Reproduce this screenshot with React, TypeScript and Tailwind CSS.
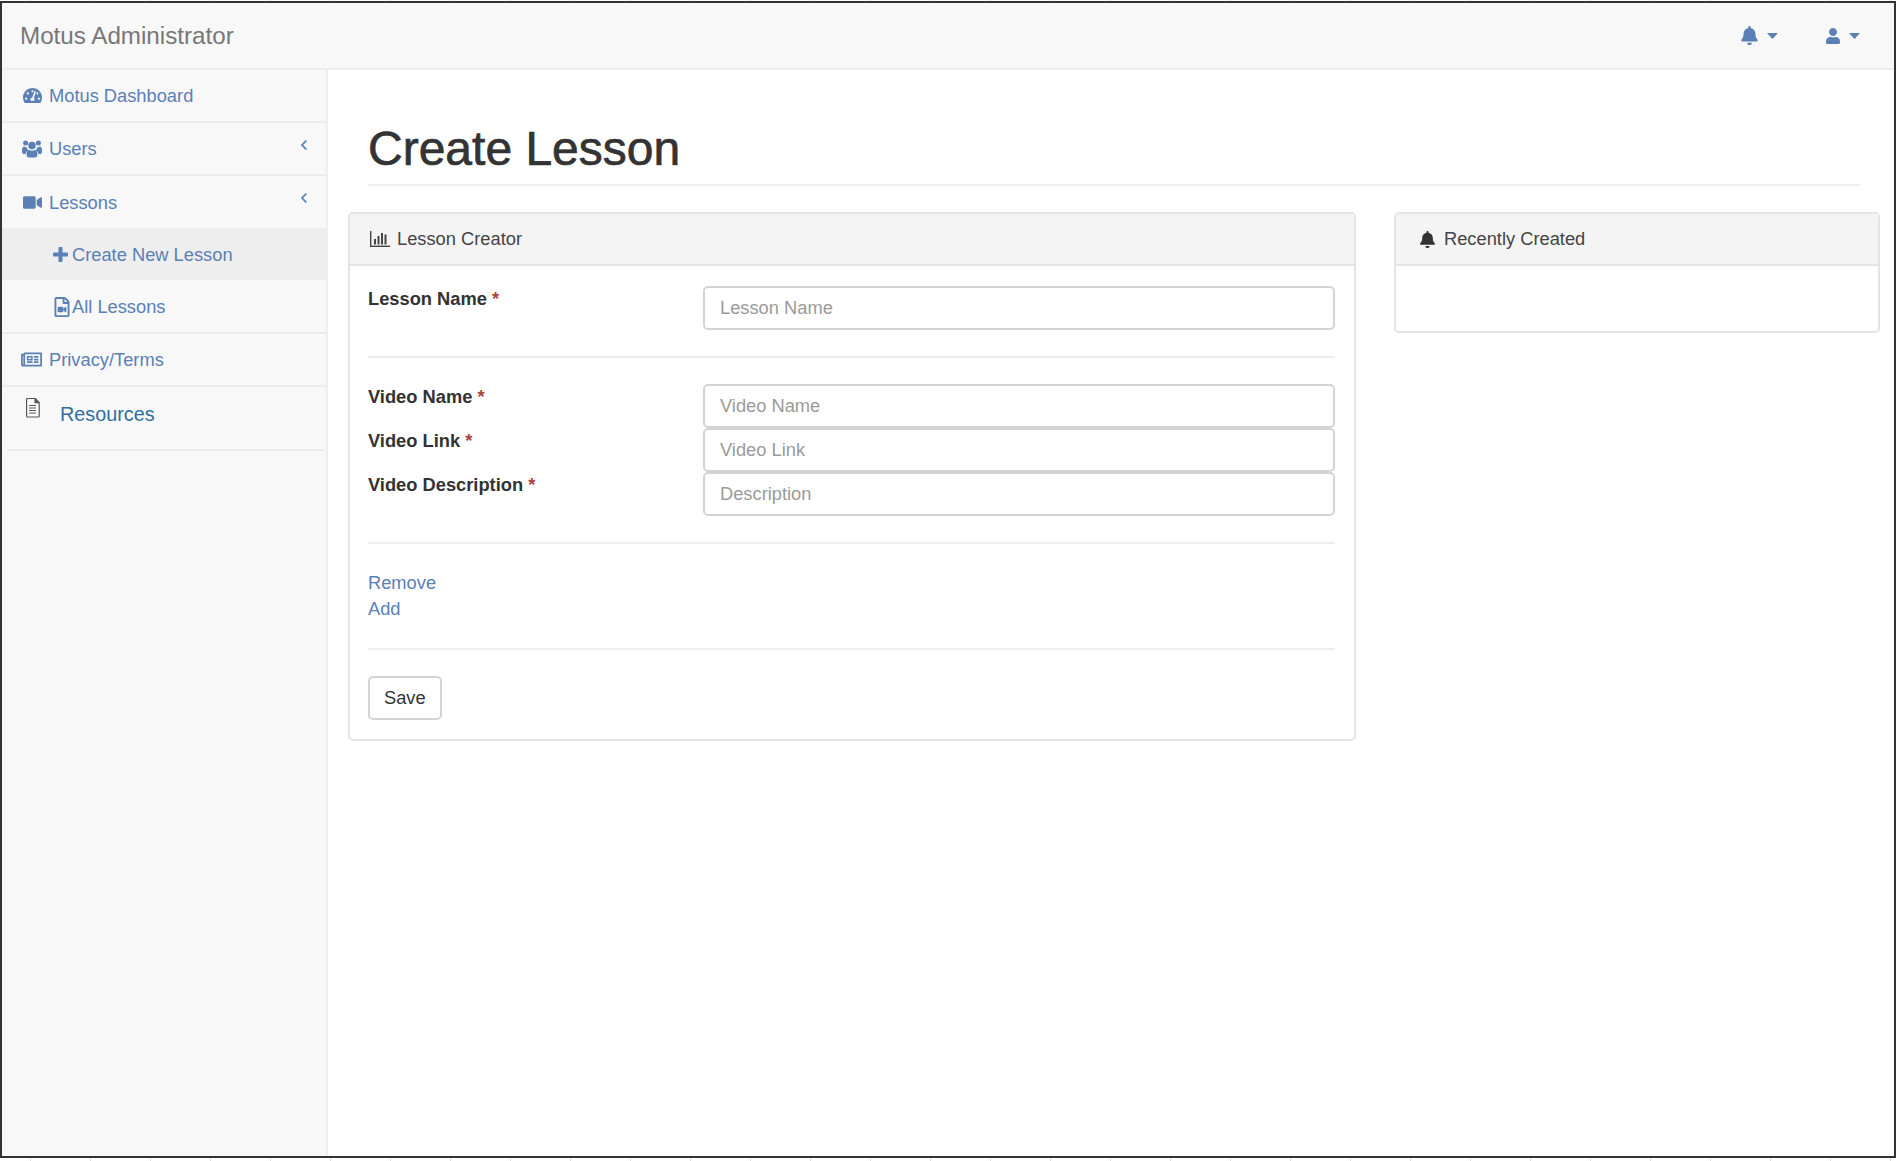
import { FaTachometerAlt, FaVideo, FaBell, FaUser, FaRegFileVideo, FaRegNewspaper } from "react-icons/fa";

const link = "text-[#5a80b5]";

function ChartIcon() {
  return (
    <svg width="20" height="16" viewBox="0 0 20 16" fill="currentColor" className="shrink-0">
      <rect x="0" y="0" width="1.4" height="16" />
      <rect x="0" y="14.6" width="20" height="1.4" />
      <rect x="4" y="8" width="2" height="5.5" />
      <rect x="7.5" y="5" width="2" height="8.5" />
      <rect x="11" y="2" width="2" height="11.5" />
      <rect x="14.5" y="3.500" width="2" height="10" />
    </svg>
  );
}

function FileIcon() {
  return (
    <svg width="15" height="20" viewBox="0 0 15 20" fill="none" stroke="#555" strokeWidth="1.2" className="shrink-0">
      <path d="M1.6 1.5a1 1 0 0 1 1-1h7.6l4 4v13.5a1 1 0 0 1-1 1h-10.600a1 1 0 0 1-1-1z" fill="#fff" />
      <path d="M10 .8v3.900h4" fill="#555" />
      <path d="M4 7.500h7M4 10h7M4 12.500h7M4 15h7" />
    </svg>
  );
}

function UsersIcon() {
  return (
    <svg width="20" height="18" viewBox="0 0 20 18" fill="currentColor" className="shrink-0">
      <circle cx="3.600" cy="3" r="2.500" />
      <circle cx="16.400" cy="3" r="2.500" />
      <path d="M0 10.500C0 7.500 1 6.500 2.500 6.500c.8.700 1.600 1 2.500 1 .1 1.300.5 2.300 1.300 3-1.500.6-2.400 1.800-2.700 3.500H1.500C.5 14 0 13 0 10.500zM20 10.500c0-3-1-4-2.500-4-.8.700-1.600 1-2.500 1-.1 1.300-.5 2.300-1.300 3 1.500.6 2.400 1.800 2.700 3.500h2.100c1 0 1.500-1 1.500-3.500z" />
      <circle cx="10" cy="5.500" r="3.800" />
      <path d="M4.500 14.500c0-2.600 1-4.500 2.800-4.500 1.700 1 3.700 1 5.400 0 1.800 0 2.800 1.900 2.800 4.500 0 2-1 3-2.500 3H7c-1.500 0-2.500-1-2.500-3z" />
    </svg>
  );
}

function PlusIcon() {
  return (
    <svg width="15" height="15" viewBox="0 0 15 15" fill="currentColor" className="shrink-0">
      <path d="M5.500 1a1 1 0 0 1 1-1h2a1 1 0 0 1 1 1v4.500H14a1 1 0 0 1 1 1v2a1 1 0 0 1-1 1H9.500V14a1 1 0 0 1-1 1h-2a1 1 0 0 1-1-1V9.500H1a1 1 0 0 1-1-1v-2a1 1 0 0 1 1-1h4.500z" />
    </svg>
  );
}

function Chevron({ className }: { className: string }) {
  return (
    <svg width="6" height="10" viewBox="0 0 6 10" fill="none" stroke="currentColor" strokeWidth="1.700" className={className}>
      <path d="M5.300.7 1 5l4.300 4.300" />
    </svg>
  );
}

function Caret() {
  return (
    <svg width="11" height="6" viewBox="0 0 11 6" fill="currentColor" className="shrink-0">
      <path d="M0 0h11L5.500 6z" />
    </svg>
  );
}

function NavRow({ icon, label, chevron }: { icon: React.ReactNode; label: string; chevron?: boolean }) {
  return (
    <div className={`relative flex h-[53px] items-center border-b-2 border-[#ececec] pl-[20px] ${link}`}>
      <span className="flex w-[27px] shrink-0 items-center">{icon}</span>
      <span>{label}</span>
      {chevron && <Chevron className="absolute right-[19px] top-[17px]" />}
    </div>
  );
}

function SubRow({ icon, label, active }: { icon: React.ReactNode; label: string; active?: boolean }) {
  return (
    <div className={`flex h-[52px] items-center pl-[51px] pt-[1px] ${link} ${active ? "bg-[#eeeeee]" : ""}`}>
      <span className="flex w-[19px] shrink-0 items-center">{icon}</span>
      <span>{label}</span>
    </div>
  );
}

function Field({ label, placeholder }: { label: string; placeholder: string }) {
  return (
    <div className="flex">
      <div className="w-[335px] shrink-0 pt-[1px] font-bold leading-[24px] text-[#333]">
        {label} <span className="text-[#a94442]">*</span>
      </div>
      <input
        readOnly
        placeholder={placeholder}
        className="h-[44px] w-[632px] rounded-[5px] border-2 border-[#d4d4d4] bg-white px-[15px] text-[18.300px] text-[#555] outline-none placeholder:text-[#9a9a9a]"
      />
    </div>
  );
}

function Panel({ title, icon, children, className }: { title: string; icon: React.ReactNode; children: React.ReactNode; className: string }) {
  return (
    <section className={`rounded-[5px] border-2 border-[#e4e4e4] bg-white ${className}`}>
      <header className="flex h-[52px] items-center gap-[7px] border-b-2 border-[#e4e4e4] bg-[#f4f4f4] text-[#444]">
        {icon}
        <span>{title}</span>
      </header>
      {children}
    </section>
  );
}

export default function App() {
  return (
    <div className="flex h-[1161px] w-[1898px] flex-col overflow-hidden bg-[repeating-linear-gradient(90deg,#ffffff_0,#ffffff_30px,#dddddd_30px,#dddddd_31px,#ffffff_31px,#ffffff_60px)] pb-[3px] pr-[2px] pt-[1px] font-['Liberation_Sans',Arial,sans-serif] text-[18.300px] leading-[24px]">
      <div className="flex min-h-0 flex-1 flex-col border-2 border-[#333] bg-white">
        <nav className="flex h-[67px] shrink-0 items-center justify-between border-b-2 border-[#eeeeee] bg-[#f8f8f8] pl-[18px] pr-[34px]">
          <span className="text-[24.200px] text-[#777]">Motus Administrator</span>
          <div className={`flex items-center gap-[47px] ${link}`}>
            <span className="flex items-center gap-[8px]">
              <FaBell className="text-[19px]" />
              <Caret />
            </span>
            <span className="flex items-center gap-[8px]">
              <FaUser className="text-[16px]" />
              <Caret />
            </span>
          </div>
        </nav>
        <div className="flex min-h-0 flex-1">
          <aside className="w-[326px] shrink-0 border-r-2 border-[#eeeeee] bg-[#f8f8f8]">
            <NavRow icon={<FaTachometerAlt className="ml-[1px] text-[19px]" />} label="Motus Dashboard" />
            <NavRow icon={<UsersIcon />} label="Users" chevron />
            <div className="border-b-2 border-[#ececec]">
              <div className={`relative flex h-[52px] items-center pl-[20px] pt-[1px] ${link}`}>
                <span className="flex w-[27px] shrink-0 items-center"><FaVideo className="ml-[1px] text-[19px]" /></span>
                <span>Lessons</span>
                <Chevron className="absolute right-[19px] top-[17px]" />
              </div>
              <SubRow icon={<PlusIcon />} label="Create New Lesson" active />
              <SubRow icon={<FaRegFileVideo className="-ml-[1px] text-[20px]" />} label="All Lessons" />
            </div>
            <NavRow icon={<FaRegNewspaper className="-ml-[1px] text-[21px]" />} label="Privacy/Terms" />
            <div className="ml-[5px] mr-[1px] flex h-[64px] border-b-2 border-[#ececec] text-[19.800px]">
              <span className="ml-[18px] w-[35px] pt-[11px]"><FileIcon /></span>
              <span className="pt-[15px] text-[#2f6f9f]">Resources</span>
            </div>
          </aside>
          <main className="min-w-0 flex-1 pl-[20px] pr-[13px]">
            <div className="mb-[26px] ml-[20px] mr-[21px] h-[116px] border-b-2 border-[#eeeeee] pt-[49px]">
              <h1 className="text-[48px] font-medium leading-[60px] text-[#333] [-webkit-text-stroke:0.7px_#333]">Create Lesson</h1>
            </div>
            <div className="flex items-start gap-[38px]">
              <Panel title="Lesson Creator" icon={<span className="ml-[20px]"><ChartIcon /></span>} className="w-[1008px]">
                <div className="pl-[18px] pr-[19px] pt-[20px]">
                  <Field label="Lesson Name" placeholder="Lesson Name" />
                  <hr className="my-[26px] border-t-2 border-[#eeeeee]" />
                  <Field label="Video Name" placeholder="Video Name" />
                  <Field label="Video Link" placeholder="Video Link" />
                  <Field label="Video Description" placeholder="Description" />
                  <hr className="my-[26px] border-t-2 border-[#eeeeee]" />
                  <div className={`leading-[26px] ${link}`}>
                    <div>Remove</div>
                    <div>Add</div>
                  </div>
                  <hr className="my-[26px] border-t-2 border-[#eeeeee]" />
                  <button className="mb-[19px] block h-[44px] rounded-[5px] border-2 border-[#d4d4d4] bg-white px-[14px] text-[#333]">Save</button>
                </div>
              </Panel>
              <Panel title="Recently Created" icon={<FaBell className="ml-[23px] mr-[1px] text-[17px] text-[#333]" />} className="h-[121px] w-[486px]">
                <div />
              </Panel>
            </div>
          </main>
        </div>
      </div>
    </div>
  );
}
